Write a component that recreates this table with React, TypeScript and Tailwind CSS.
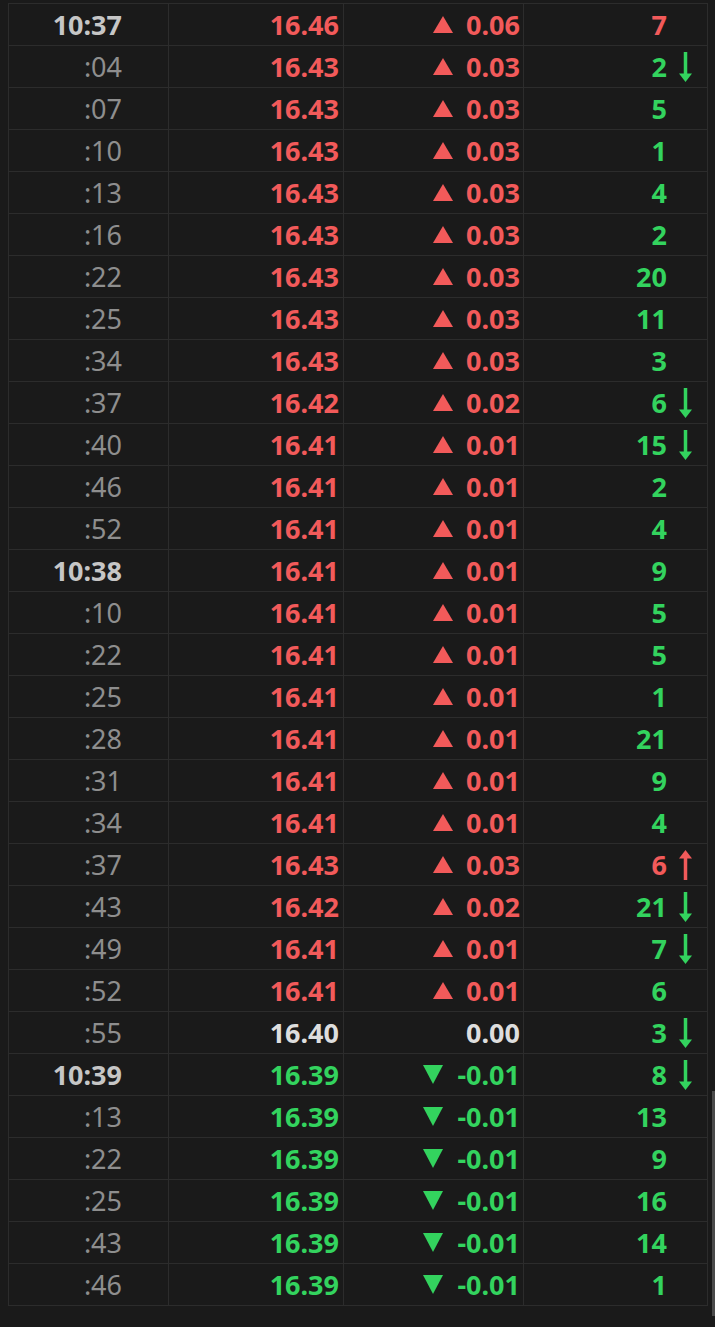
import React from "react";

type Dir = "up" | "down" | "none";
type Row = {
  t: string;
  major: boolean;
  price: string;
  dir: Dir;
  chg: string;
  vol: string;
  volRed?: boolean;
  arrow?: "up" | "down";
};

const r = (
  t: string,
  price: string,
  dir: Dir,
  chg: string,
  vol: string,
  arrow?: "up" | "down",
  volRed?: boolean
): Row => ({ t, major: !t.startsWith(":"), price, dir, chg, vol, arrow, volRed });

const rows: Row[] = [
  r("10:37", "16.46", "up", "0.06", "7", undefined, true),
  r(":04", "16.43", "up", "0.03", "2", "down"),
  r(":07", "16.43", "up", "0.03", "5"),
  r(":10", "16.43", "up", "0.03", "1"),
  r(":13", "16.43", "up", "0.03", "4"),
  r(":16", "16.43", "up", "0.03", "2"),
  r(":22", "16.43", "up", "0.03", "20"),
  r(":25", "16.43", "up", "0.03", "11"),
  r(":34", "16.43", "up", "0.03", "3"),
  r(":37", "16.42", "up", "0.02", "6", "down"),
  r(":40", "16.41", "up", "0.01", "15", "down"),
  r(":46", "16.41", "up", "0.01", "2"),
  r(":52", "16.41", "up", "0.01", "4"),
  r("10:38", "16.41", "up", "0.01", "9"),
  r(":10", "16.41", "up", "0.01", "5"),
  r(":22", "16.41", "up", "0.01", "5"),
  r(":25", "16.41", "up", "0.01", "1"),
  r(":28", "16.41", "up", "0.01", "21"),
  r(":31", "16.41", "up", "0.01", "9"),
  r(":34", "16.41", "up", "0.01", "4"),
  r(":37", "16.43", "up", "0.03", "6", "up", true),
  r(":43", "16.42", "up", "0.02", "21", "down"),
  r(":49", "16.41", "up", "0.01", "7", "down"),
  r(":52", "16.41", "up", "0.01", "6"),
  r(":55", "16.40", "none", "0.00", "3", "down"),
  r("10:39", "16.39", "down", "-0.01", "8", "down"),
  r(":13", "16.39", "down", "-0.01", "13"),
  r(":22", "16.39", "down", "-0.01", "9"),
  r(":25", "16.39", "down", "-0.01", "16"),
  r(":43", "16.39", "down", "-0.01", "14"),
  r(":46", "16.39", "down", "-0.01", "1"),
];

function Tri({ dir }: { dir: "up" | "down" }) {
  return dir === "up" ? (
    <svg width="20" height="17" viewBox="0 0 20 17" className="mr-[13px] shrink-0">
      <polygon points="10,0 20,17 0,17" fill="#f25a5a" />
    </svg>
  ) : (
    <svg width="20" height="19" viewBox="0 0 20 19" className="mr-[14px] shrink-0">
      <polygon points="0,0 20,0 10,19" fill="#33d35e" />
    </svg>
  );
}

function Arrow({ dir }: { dir: "up" | "down" }) {
  const color = dir === "up" ? "#f25a5a" : "#33d35e";
  return (
    <svg
      width="13"
      height="30"
      viewBox="0 0 13 30"
      className={dir === "up" ? "rotate-180" : ""}
    >
      <rect x="4.75" y="0" width="3.5" height="23" fill={color} />
      <polygon points="0,21.5 13,21.5 6.5,30" fill={color} />
    </svg>
  );
}

export default function App() {
  const red = "text-[#f25a5a]";
  const green = "text-[#33d35e]";
  const white = "text-[#dedede]";
  return (
    <div
      className="relative w-[715px] h-[1327px] bg-[#1a1a1a] overflow-hidden pt-[3px] pl-[8px]"
      style={{ fontFamily: '"Noto Sans", "Open Sans", sans-serif' }}
    >
      <div className="w-[700px] border-b border-[#2c2c2c]">
        {rows.map((row, i) => {
          const pc = row.dir === "up" ? red : row.dir === "down" ? green : white;
          return (
            <div
              key={i}
              className="grid grid-cols-[160px_175px_180px_185px] h-[42px] border-t border-[#2c2c2c]"
            >
              <div
                className={`flex items-center justify-end pr-[46px] border-l border-[#2c2c2c] text-[27px] leading-none ${
                  row.major ? "font-bold text-[#c6c6c6]" : "font-normal text-[#8e8e8e]"
                }`}
              >
                {row.t}
              </div>
              <div
                className={`flex items-center justify-end pr-[4px] border-l border-[#2c2c2c] text-[27px] font-bold leading-none ${pc}`}
              >
                {row.price}
              </div>
              <div
                className={`flex items-center justify-end pr-[3px] border-l border-[#2c2c2c] text-[27px] font-bold leading-none ${pc}`}
              >
                {row.dir !== "none" && <Tri dir={row.dir} />}
                <span>{row.chg}</span>
              </div>
              <div
                className={`flex items-center justify-end pr-[15px] border-l border-r border-[#2c2c2c] text-[27px] font-bold leading-none ${
                  row.volRed ? red : green
                }`}
              >
                <span>{row.vol}</span>
                <span className="ml-[12px] w-[13px] h-[30px] flex items-center">
                  {row.arrow && <Arrow dir={row.arrow} />}
                </span>
              </div>
            </div>
          );
        })}
      </div>
      <div className="absolute right-0 top-[1091px] w-[3px] h-[225px] bg-[#4a4a4a]" />
    </div>
  );
}
